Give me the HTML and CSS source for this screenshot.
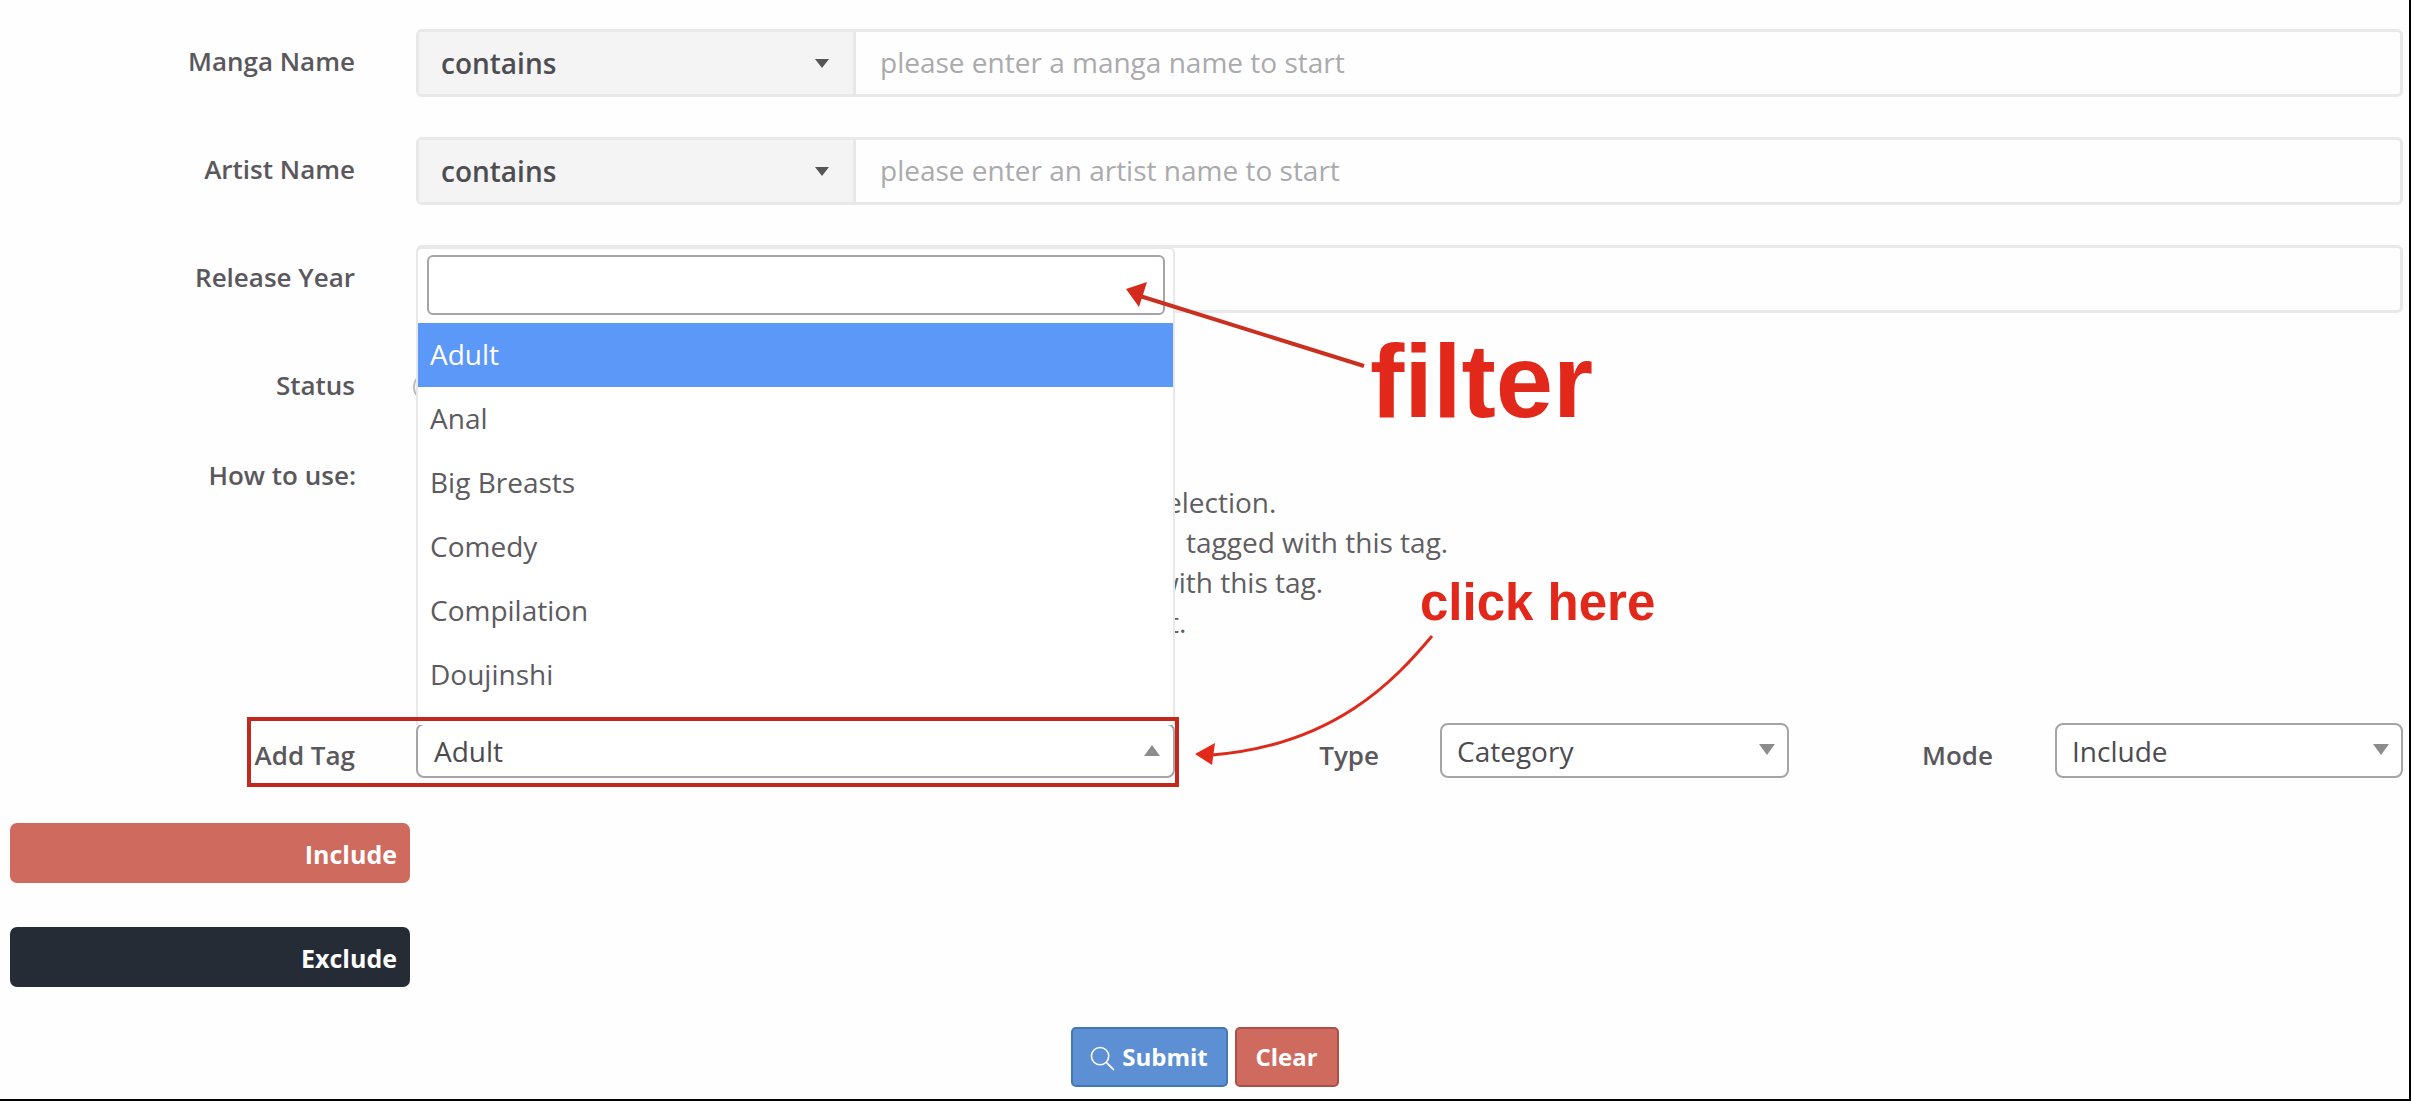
FILE: index.html
```html
<!DOCTYPE html>
<html lang="en">
<head>
<meta charset="utf-8">
<title>Manga search</title>
<link rel="stylesheet" href="styles.css">
</head>
<body>
<main class="page">
  <div class="row">
    <label class="label">Manga Name</label>
    <div class="group">
      <div class="prefix"><span>contains</span><i class="caret"></i></div>
      <div class="field placeholder">please enter a manga name to start</div>
    </div>
  </div>
  <div class="row">
    <label class="label">Artist Name</label>
    <div class="group">
      <div class="prefix"><span>contains</span><i class="caret"></i></div>
      <div class="field placeholder">please enter an artist name to start</div>
    </div>
  </div>
  <div class="row">
    <label class="label">Release Year</label>
    <div class="group"><div class="field"></div></div>
  </div>
  <div class="row status-row">
    <label class="label">Status</label>
    <div class="radio"></div>
  </div>
  <div class="row help-row">
    <label class="label">How to use:</label>
    <ul class="help">
      <li class="line-1">election.</li>
      <li class="line-2">tagged with this tag.</li>
      <li class="line-3">with this tag.</li>
      <li class="line-4">t.</li>
    </ul>
  </div>
  <div class="row tag-row">
    <label class="label">Add Tag</label>
    <div class="select tag-select">
      <span>Adult</span><i class="arrow up"></i>
      <div class="dropdown">
        <div class="search"></div>
        <ul class="options">
          <li class="active">Adult</li>
          <li>Anal</li>
          <li>Big Breasts</li>
          <li>Comedy</li>
          <li>Compilation</li>
          <li>Doujinshi</li>
        </ul>
      </div>
      <div class="callout"></div>
    </div>
    <label class="label type-label">Type</label>
    <div class="select type-select"><span>Category</span><i class="arrow"></i></div>
    <label class="label mode-label">Mode</label>
    <div class="select mode-select"><span>Include</span><i class="arrow"></i></div>
  </div>
  <div class="bar bar-include">Include</div>
  <div class="bar bar-exclude">Exclude</div>
  <div class="actions">
    <button class="btn btn-submit" type="button">
      <svg class="search-icon" viewBox="0 0 26 26" width="26" height="26" aria-hidden="true"><circle cx="10.5" cy="10.5" r="9" fill="none" stroke="currentColor" stroke-width="1.6"/><path d="M17 17l8 8" fill="none" stroke="currentColor" stroke-width="1.8"/></svg>
      Submit
    </button>
    <button class="btn btn-clear" type="button">Clear</button>
  </div>

  <svg class="arrows" viewBox="0 0 2411 1101" width="2411" height="1101" aria-hidden="true">
    <path d="M1364 366L1140 296" fill="none" stroke="#c9301f" stroke-width="4"/>
    <path d="M1126 289l21-7-8 25z" fill="#d42b1c"/>
    <path d="M1432 636C1395 680 1335 745 1212 755" fill="none" stroke="#dc2a1b" stroke-width="3"/>
    <path d="M1195 754l20-11-3 22z" fill="#e2291a"/>
  </svg>
  <div class="note note-filter">filter</div>
  <div class="note note-click">click here</div>
</main>
</body>
</html>
```
FILE: styles.css
```css
* { box-sizing: border-box; }
html, body { margin: 0; padding: 0; }
body { background: #fefefe; color: #58565a; font-family: "Open Sans", sans-serif; font-size: 28px; }
ul { list-style: none; margin: 0; padding: 0; }

.page {
  position: relative;
  width: 2411px;
  height: 1101px;
  padding: 29px 6px 0 0;
  border-right: 2px solid #000;
  border-bottom: 2px solid #000;
  overflow: hidden;
}

.row { display: flex; align-items: flex-start; margin-bottom: 40px; height: 68px; }
.label {
  flex: none;
  width: 355px;
  margin-right: 61px;
  text-align: right;
  font-weight: 600;
  font-size: 26px;
  line-height: 64px;
  color: #5a585c;
}

.group {
  flex: 1;
  display: flex;
  height: 68px;
  border: 3px solid #e8e8e8;
  border-radius: 6px;
}
.prefix {
  flex: none;
  width: 437px;
  display: flex;
  align-items: center;
  justify-content: space-between;
  padding: 0 24px 0 22px;
  background: #f4f4f5;
  border-right: 3px solid #e8e8e8;
  font-weight: 600;
  color: #4e4d51;
}
.caret { width: 0; height: 0; border: 7.5px solid transparent; border-top: 9px solid #555; border-bottom: 0; }
.field { flex: 1; padding: 0 24px; line-height: 61px; }
.placeholder { color: #aaaaad; }

.radio { width: 30px; height: 30px; margin: 19px 0 0 -3px; border: 2px solid #bbb; border-radius: 50%; }

.status-row { margin-bottom: 36px; }
.help-row { height: 266px; margin-bottom: 0; }
.help-row .label { line-height: 36px; margin-right: 0; width: 356px; }
.help { flex: 1; padding: 25px 0 0; line-height: 40px; color: #605e62; }
.line-1 { padding-left: 810px; }
.line-2 { padding-left: 830px; }
.line-3 { padding-left: 801px; }
.line-4 { padding-left: 813px; }

.tag-row { height: 55px; margin-bottom: 45px; }
.tag-row .label { line-height: 64px; }
.select {
  position: relative;
  flex: none;
  height: 55px;
  display: flex;
  align-items: center;
  justify-content: space-between;
  padding: 0 13px 0 16px;
  border: 2px solid #a5a5a5;
  border-radius: 8px;
  background: #fff;
  color: #4c4b4f;
  line-height: 1;
}
.tag-select { width: 759px; }
.type-label { width: 204px; margin-right: 61px; }
.type-select { width: 349px; padding-left: 15px; padding-right: 12px; }
.mode-label { width: 204px; margin-right: 62px; }
.mode-select { width: 348px; padding-left: 15px; padding-right: 12px; }
.arrow { width: 0; height: 0; border: 8px solid transparent; border-top: 11px solid #8c8c8c; border-bottom: 0; margin-top: -2px; }
.arrow.up { border-top: 0; border-bottom: 11px solid #8c8c8c; margin-top: 0; }

.dropdown {
  position: absolute;
  left: -2px;
  right: -2px;
  bottom: 100%;
  height: 478px;
  background: #fff;
  border: 2px solid #e8e8e8;
  border-bottom: 0;
  border-radius: 6px 6px 0 0;
  padding: 6px 0 0;
  z-index: 2;
  color: #5d5b5f;
  line-height: normal;
}
.search { height: 60px; margin: 0 8px 8px 9px; border: 2px solid #a5a5a5; border-radius: 6px; }
.options li { height: 64px; line-height: 62px; padding-left: 12px; }
.options .active { background: #5b98f7; color: #fff; }

.callout {
  position: absolute;
  left: -171px;
  top: -8px;
  width: 932px;
  height: 70px;
  border: 4px solid #c4281c;
  z-index: 3;
}

.bar {
  width: 400px;
  height: 60px;
  margin: 0 0 44px 10px;
  padding-right: 13px;
  border-radius: 7px;
  text-align: right;
  font-weight: 700;
  font-size: 25px;
  line-height: 62px;
  color: #fff;
}
.bar-include { background: #cf6a5f; }
.bar-exclude { background: #262c35; margin-bottom: 40px; }

.actions { display: flex; justify-content: center; gap: 7px; padding-left: 6px; }
.btn {
  height: 60px;
  border-radius: 5px;
  font: 700 24px/1 "Open Sans", sans-serif;
  color: #fff;
  display: flex;
  align-items: center;
  justify-content: center;
  padding: 0;
}
.btn-submit { width: 157px; background: #5c8fd3; border: 2px solid #4479b0; gap: 7px; }
.btn-clear { width: 104px; background: #cf6a5f; border: 2px solid #ae4f47; }
.search-icon { margin-top: 3px; width: 25px; height: 25px; }

.arrows { position: absolute; left: 0; top: 0; z-index: 4; pointer-events: none; }
.note { position: absolute; z-index: 4; font-family: "Liberation Sans", Arial, sans-serif; font-weight: 700; color: #e2281a; line-height: 1; }
.note-filter { left: 1370px; top: 330px; font-size: 103px; }
.note-click { left: 1420px; top: 577px; font-size: 51px; }
```
